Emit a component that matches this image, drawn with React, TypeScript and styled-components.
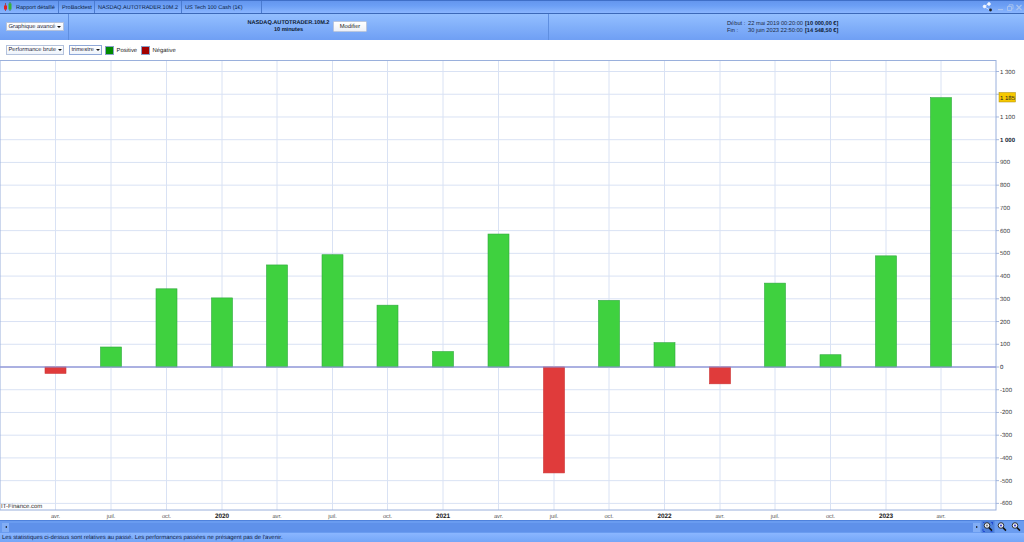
import React from "react";
import styled, { createGlobalStyle } from "styled-components";

const Global = createGlobalStyle`
  html, body { margin: 0; padding: 0; background: #fff; overflow: hidden; }
  body { font-family: "Liberation Sans", Arial, sans-serif; text-rendering: geometricPrecision; }
`;
const Page = styled.div`
  width: 1024px; height: 542px; display: flex; flex-direction: column; overflow: hidden; background: #fff;
`;
const TitleBar = styled.div`
  height: 14px; flex: none; display: flex; align-items: center; justify-content: space-between; box-sizing: border-box;
  background: linear-gradient(#6496ee, #6c9ff5 40%, #8ab6ff); border-top: 1px solid #3f6fc8; border-bottom: 1px solid #3c69b8;
  font-size: 5.55px; color: #0a1f48;
`;
const TitleTabs = styled.div`display: flex; align-items: center; height: 100%;`;
const AppLogo = styled.svg`width: 10px; height: 10px; margin: 0 3px 0 3px;`;
const TitleTab = styled.div<{ $w: number; $first?: boolean }>`
  width: ${p => p.$w}px; height: 100%; display: flex; align-items: center; white-space: nowrap; padding: 1px 0 0 ${p => p.$first ? 0 : 3}px; box-sizing: border-box;
  border-right: 1px solid #4a7bd0;
`;
const WindowTools = styled.svg`width: 46px; height: 12px; margin-right: 0;`;
const Header = styled.div`
  height: 26px; flex: none; display: flex; background: linear-gradient(#93bfff, #6f9ff4);
`;
const HeaderCell = styled.div<{ $w: number }>`
  width: ${p => p.$w}px; flex: none; box-sizing: border-box; border-right: 1px solid #5f8fe0; display: flex; align-items: center; padding-bottom: 1px;
`;
const HeaderLast = styled.div`
  flex: 1; display: grid; grid-template-columns: 21px 57px auto; grid-auto-rows: 7.5px; align-content: center; padding: 1px 0 0 178px;
  font-size: 5.7px; color: #1b2a45; white-space: nowrap; align-items: center;
`;
const Strong = styled.b`color: #0c1830; font-size: 5.6px;`;
const Select = styled.div<{ $w: number; $blue?: boolean }>`
  width: ${p => p.$w}px; height: 9.5px; flex: none; box-sizing: border-box; background: linear-gradient(#fff, #eef3fb); border: 1px solid ${p => p.$blue ? "#8fa8d8" : "#b4c2dc"};
  display: flex; align-items: center; justify-content: space-between; padding: 0.5px 1.5px 0 1.5px; font-size: 5.75px; color: #1a2438; white-space: nowrap;
`;
const Caret = styled.span`width: 0; height: 0; border-left: 2px solid transparent; border-right: 2px solid transparent; border-top: 2.5px solid #111;`;
const CenterInfo = styled.div`
  display: flex; align-items: center; width: 100%; padding-left: 178px; gap: 3px; box-sizing: border-box;
`;
const TitleBlock = styled.div`text-align: center; font-weight: 700; font-size: 5.6px; line-height: 7.4px; padding-top: 1.5px; color: #0c1830; white-space: nowrap; width: 83px;`;
const ModifyButton = styled.div`
  width: 34px; height: 11px; background: linear-gradient(#fff, #eef1f7); border: 1px solid #b9c6de; box-sizing: border-box; padding-top: 0.5px; font-size: 5.8px; color: #222; display: flex; align-items: center; justify-content: center; border-radius: 1px;
`;
const Toolbar = styled.div`
  height: 20px; flex: none; display: flex; align-items: center; padding-left: 6px; background: #fff; font-size: 5.9px; color: #222;
`;
const Swatch = styled.div<{ $c: string }>`
  width: 9px; height: 9px; background: ${p => p.$c}; border: 0.5px solid #8aa0c8; box-sizing: border-box;
`;
const Legend = styled.span<{ $w: number }>`width: ${p => p.$w}px; padding: 1px 0 0 3px; box-sizing: border-box;`;
const Gap = styled.div<{ $w: number }>`width: ${p => p.$w}px; flex: none;`;
const Chart = styled.svg`display: block; width: 1024px; height: 460px; flex: none; font-family: "Liberation Sans", Arial, sans-serif;`;
const Scrollbar = styled.div`
  height: 13px; flex: none; display: flex; align-items: center; background: #6a9cf0; border-top: 1px solid #4f82dc; box-sizing: border-box; padding: 0 0 0 2px;
`;
const Track = styled.div`
  flex: 1; height: 9px; background: #5f91ea; display: flex; align-items: center; justify-content: space-between; padding: 0;
`;
const ArrowButton = styled.div`
  width: 7px; height: 9px; background: #82aef6; display: flex; align-items: center; justify-content: center;
`;
const Arrow = styled.span<{ $right?: boolean }>`
  width: 0; height: 0; border-top: 1.5px solid transparent; border-bottom: 1.5px solid transparent;
  ${p => p.$right ? "border-left: 2px solid #111;" : "border-right: 2px solid #111;"}
`;
const ZoomIcons = styled.svg`width: 44px; height: 12px; flex: none;`;
const StatusBar = styled.div`
  flex: 1; display: flex; align-items: center; padding-left: 2px; font-size: 5.92px; color: #0f2145; white-space: nowrap; background: linear-gradient(#8ab6ff, #74a6f8);
`;

const months = ["avr.", "juil.", "oct.", "2020", "avr.", "juil.", "oct.", "2021", "avr.", "juil.", "oct.", "2022", "avr.", "juil.", "oct.", "2023", "avr."];
const xs = [55.5, 111, 166.5, 222, 277, 332.5, 387.5, 443, 498.5, 554, 609, 664.5, 720, 775, 830.5, 886, 941];
const values = [-28, 88, 344, 304, 449, 494, 272, 68, 585, -466, 293, 107, -74, 369, 54, 489, 1185];
const T = 60;
const yOf = (v: number) => 367 - T - v * 0.2273;
const ticks = Array.from({ length: 20 }, (_, i) => 1300 - i * 100);
const fmt = (v: number) => {
  const a = Math.abs(v);
  const s = a >= 1000 ? `1 ${String(a - 1000).padStart(3, "0")}` : String(a);
  return (v < 0 ? "-" : "") + s;
};

const Magnifier = ({ x, active, dot }: { x: number; active?: boolean; dot?: string }) => (
  <g transform={`translate(${x} 0)`}>
    {active && <rect x="-1.5" y="0" width="13" height="12" fill="#4f82dc" />}
    <circle cx="4" cy="4.5" r="2.8" fill="#e4ebf6" stroke="#222" strokeWidth="0.9" />
    <line x1="6" y1="6.6" x2="9" y2="9.6" stroke="#111" strokeWidth="1.5" />
    {dot && <circle cx="4" cy="4.5" r="1" fill={dot} />}
    {active && <path d="M0 1.5h1.5M8 1.5h2M0 10.5h2M7.5 10.5h2M9.5 1.5v2M0 8v2" stroke="#1a3fd0" strokeWidth="0.8" />}
  </g>
);

export default function App() {
  return (
    <Page>
      <Global />
      <TitleBar>
        <TitleTabs>
          <AppLogo viewBox="0 0 10 10">
            <line x1="2.5" y1="1" x2="2.5" y2="9" stroke="#a11" strokeWidth="0.6" />
            <rect x="1" y="3.5" width="3" height="4" fill="#e02222" />
            <line x1="7" y1="0" x2="7" y2="9" stroke="#161" strokeWidth="0.6" />
            <rect x="5.5" y="1.5" width="3" height="6" fill="#36b336" />
          </AppLogo>
          <TitleTab $w={43} $first>Rapport détaillé</TitleTab>
          <TitleTab $w={36}>ProBacktest</TitleTab>
          <TitleTab $w={87}>NASDAQ.AUTOTRADER.10M.2</TitleTab>
          <TitleTab $w={80}>US Tech 100 Cash (1€)</TitleTab>
        </TitleTabs>
        <WindowTools viewBox="0 0 46 12">
          <g stroke="#eef4ff" strokeWidth="0.7" fill="#f4f8ff">
            <line x1="6" y1="5.5" x2="10.5" y2="3" /><line x1="6" y1="5.5" x2="12" y2="9" />
            <circle cx="6.5" cy="5.5" r="1.4" /><circle cx="11" cy="3" r="1.4" />
          </g>
          <circle cx="12.5" cy="9" r="1.4" fill="#222" />
          <rect x="20" y="8" width="5" height="1.2" fill="#a9c4ef" />
          <path d="M29.5 5.5h4v4h-4zM31 5.5v-1.7h4v4h-1.5" fill="none" stroke="#a9c4ef" strokeWidth="0.9" />
          <path d="M38.5 4l5 5M43.5 4l-5 5" stroke="#a9c4ef" strokeWidth="1.2" />
        </WindowTools>
      </TitleBar>
      <Header>
        <HeaderCell $w={69}>
          <Gap $w={6} />
          <Select $w={57.5}>Graphique avancé<Caret /></Select>
        </HeaderCell>
        <HeaderCell $w={480}>
          <CenterInfo>
            <TitleBlock>NASDAQ.AUTOTRADER.10M.2<br />10 minutes</TitleBlock>
            <ModifyButton>Modifier</ModifyButton>
          </CenterInfo>
        </HeaderCell>
        <HeaderLast>
          <span>Début :</span><span>22 mai 2019 00:20:00</span><Strong>[10 000,00 €]</Strong>
          <span>Fin :</span><span>30 juin 2023 22:50:00</span><Strong>[14 548,50 €]</Strong>
        </HeaderLast>
      </Header>
      <Toolbar>
        <Select $w={58}>Performance brute<Caret /></Select>
        <Gap $w={5} />
        <Select $w={33} $blue>trimestre<Caret /></Select>
        <Gap $w={2.5} />
        <Swatch $c="#008a00" />
        <Legend $w={25}>Positive</Legend>
        <Gap $w={2} />
        <Swatch $c="#a30000" />
        <Legend $w={30}>Négative</Legend>
      </Toolbar>
      <Chart viewBox="0 0 1024 460">
        {ticks.map(v => (
          <g key={v}>
            <line x1="0" x2="996" y1={yOf(v)} y2={yOf(v)} stroke={v === 0 ? "#8f96d8" : "#d9e2f4"} strokeWidth="1" />
            <line x1="996" x2="999" y1={yOf(v)} y2={yOf(v)} stroke="#8fa6d6" strokeWidth="0.8" />
            {v !== 1200 && (
              <text x="1000" y={yOf(v) + 2} fontSize="6" fill={v === 1000 || v === 0 ? "#123" : "#3a3a3a"} fontWeight={v === 1000 ? 700 : 400}>{fmt(v)}</text>
            )}
          </g>
        ))}
        {xs.map((x, i) => {
          const year = /^\d/.test(months[i]);
          return (
            <g key={i}>
              <line x1={x} x2={x} y1="0.5" y2="450" stroke="#d9e2f4" strokeWidth="1" />
              <text x={x} y="457.5" textAnchor="middle" fontSize={year ? 6.4 : 5.7} fontWeight={year ? 700 : 400} fill={year ? "#222" : "#555"}>{months[i]}</text>
            </g>
          );
        })}
        <rect x="0" y="0.5" width="996" height="449.5" fill="none" stroke="#9ab0dc" strokeWidth="1" />
        {values.map((v, i) => {
          const y0 = yOf(0), y1 = yOf(v);
          return (
            <rect key={i} x={xs[i] - 10.5} y={Math.min(y0, y1)} width="21" height={Math.abs(y1 - y0)}
              fill={v > 0 ? "#3fd13f" : "#e03b3b"} stroke={v > 0 ? "#2fa83f" : "#c33"} strokeWidth="0.6" />
          );
        })}
        <line x1="0" x2="996" y1={yOf(0)} y2={yOf(0)} stroke="#8f96d8" strokeWidth="1" />
        <rect x="999" y="32.5" width="16.5" height="9.5" fill="#f6c800" stroke="#a88a10" strokeWidth="0.5" />
        <text x="1000" y="39.5" fontSize="6" fill="#222">1 185</text>
        <text x="1" y="448" fontSize="6" fill="#333">IT-Finance.com</text>
      </Chart>
      <Scrollbar>
        <Track><ArrowButton><Arrow /></ArrowButton><ArrowButton><Arrow $right /></ArrowButton></Track>
        <ZoomIcons viewBox="0 0 44 12">
          <Magnifier x={3} active dot="#777" />
          <Magnifier x={17} dot="#3333cc" />
          <Magnifier x={31} dot="#3333cc" />
        </ZoomIcons>
      </Scrollbar>
      <StatusBar>Les statistiques ci-dessus sont relatives au passé. Les performances passées ne présagent pas de l'avenir.</StatusBar>
    </Page>
  );
}
